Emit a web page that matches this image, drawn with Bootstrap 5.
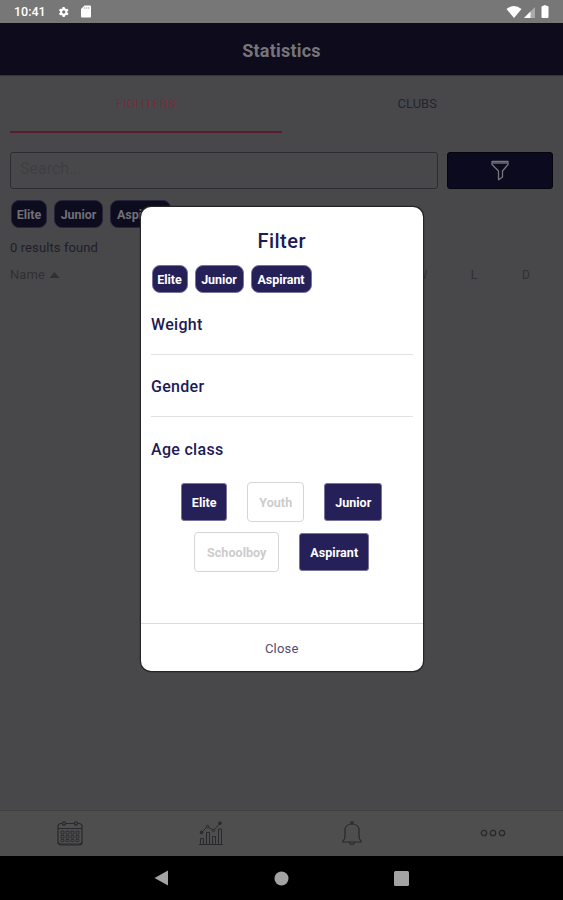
<!DOCTYPE html>
<html lang="en">
<head>
<meta charset="utf-8">
<meta name="viewport" content="width=device-width, initial-scale=1">
<title>Statistics</title>
<link href="https://cdn.jsdelivr.net/npm/bootstrap@5.3.0/dist/css/bootstrap.min.css" rel="stylesheet">
<style>
body{font-family:Roboto,"Liberation Sans",sans-serif;background:#48484a;color:#1f1d2a;font-size:13px;line-height:18px;letter-spacing:.1px}
.screen{width:563px;height:900px;overflow:hidden;background:#48484a}
svg{display:block}
.status{height:23px;background:#777;color:#fff;padding:0 11px 0 14px;font-size:12.5px;font-weight:500;letter-spacing:0}
.title-bar{height:53px;background:#0d0b1c;border-bottom:1px solid #353539;color:#76757b;font-size:18px;font-weight:700;padding-top:3px;letter-spacing:.2px}
.tabs{height:57px;padding:1px 10px 0}
.tab-item{border-bottom:2px solid transparent;letter-spacing:0;color:#25242e}
.tab-item.on{color:#7a2c3c;border-color:#5b1d2a}
.search-row{padding:19px 10px 0;gap:9px}
.search-box{width:428px;height:37px;border:1.5px solid #2d2d31;border-radius:3px;padding:0 0 3px 9px;color:#3f3f42;font-size:16px;letter-spacing:0}
.filter-btn{width:106px;height:37px;border-radius:3px;background:#0c0a1f;border:1px solid #05040c}
.chips{gap:7px}
.chips-page{padding:11px 0 0 11px}
.chip{height:28px;border-radius:8px;background:#0d0b1e;color:#717077;font-size:12.5px;font-weight:700;letter-spacing:-.05px;border:1px solid #25243a;padding-top:1px}
.chip-e{width:36px}.chip-j{width:49px}.chip-a{width:61px}
.count-line{padding:11px 0 0 10px}
.list-head{padding:9px 11px 0 10px;color:#303033}
.stat-col{width:52px;text-align:center;font-size:12px}
.dialog-box{left:141px;top:207px;width:281.500px;height:464px;background:#fff;border-radius:10px;box-shadow:0 0 0 1.2px #252527;color:#211a55}
.dialog-title{font-size:20px;font-weight:500;line-height:26px;padding-top:21px;letter-spacing:.45px}
.dialog-box .chips{padding:11px 10px 0 10.500px}
.dialog-box .chip{background:#262059;color:#fff;border-color:#77739b}
.section-head{height:62px;margin:0 10px;font-size:16px;font-weight:500;letter-spacing:.3px;padding-top:3px}
.section-head.ruled{border-bottom:1.5px solid #e2e2e4}
.opt{height:38px;border-radius:3px;background:#262059;border:1px solid #77739b;color:#fff;font-size:12.5px;font-weight:700;letter-spacing:.05px;padding-top:1px}
.opt.off{height:40px;background:#fff;color:#ccc;border:1.5px solid #d5d5d6;border-radius:4px}
.opt-e{width:46px}.opt-y{width:57px}.opt-j{width:58px}.opt-s{width:85px}.opt-a{width:70px}
.age-opts{padding-top:3px;row-gap:10px}
.opts{gap:20px;height:40px}
.dialog-foot{height:48px;border-top:1.5px solid #dcdcde;color:#514c72;letter-spacing:.2px;padding-top:2px}
.bottom-nav{height:46px;background:#4e4e4e;border-top:1px solid #414141;color:#29292d}
.sys-nav{height:44px;background:#000;color:#a3a3a3}
.sys-nav .key{width:120px}
</style>
<script src="https://cdn.jsdelivr.net/npm/bootstrap@5.3.0/dist/js/bootstrap.bundle.min.js"></script>
</head>
<body>
<div class="screen position-relative d-flex flex-column">
  <div class="status d-flex align-items-center flex-shrink-0">
    <span>10:41</span>
    <svg class="ms-2 ps-1" width="22" height="14" viewBox="0 0 22 14"><g transform="translate(7 7)" fill="#fff"><circle r="4.500"/><rect x="-1.500" y="-6" width="3" height="12" rx=".6"/><rect x="-1.500" y="-6" width="3" height="12" rx=".6" transform="rotate(60)"/><rect x="-1.500" y="-6" width="3" height="12" rx=".6" transform="rotate(120)"/><circle r="2" fill="#777"/></g></svg>
    <svg class="ms-1" width="12" height="13" viewBox="0 0 12 13"><path d="M4.500 .5H10a1 1 0 0 1 1 1v10a1 1 0 0 1-1 1H2a1 1 0 0 1-1-1V4z" fill="#fff"/><path d="M4.700 2v2M6.700 2v2M8.700 2v2" stroke="#aaa" stroke-width=".8"/></svg>
    <svg class="ms-auto" width="46" height="14" viewBox="0 0 46 14"><path d="M.5 4Q8 -2.200 15.500 4L8 13z" fill="#fff"/><path d="M29 2v11H18z" fill="#aaa"/><path d="M24.500 6.500V13H18z" fill="#fff"/><path d="M36.500 1h1V.3h3V1h1q1 0 1 1v10q0 1-1 1h-5q-1 0-1-1V2q0-1 1-1z" fill="#fff"/></svg>
  </div>
  <header class="title-bar d-flex align-items-center justify-content-center flex-shrink-0">Statistics</header>
  <nav class="tabs d-flex flex-shrink-0">
    <div class="tab-item on flex-fill w-50 d-flex align-items-center justify-content-center">FIGHTERS</div>
    <div class="tab-item flex-fill w-50 d-flex align-items-center justify-content-center">CLUBS</div>
  </nav>
  <main class="flex-fill">
    <div class="search-row d-flex">
      <div class="search-box d-flex align-items-center">Search...</div>
      <div class="filter-btn d-flex align-items-center justify-content-center">
        <svg width="18" height="21" viewBox="0 0 18 21" fill="none" stroke="#77767e" stroke-width="1.300" stroke-linejoin="round"><path d="M1 1.500h16v3L11.500 11v6L7.500 19.700V11L1 4.500z"/><path d="M1.500 3h15"/></svg>
      </div>
    </div>
    <div class="chips chips-page d-flex">
      <span class="chip chip-e d-flex align-items-center justify-content-center">Elite</span>
      <span class="chip chip-j d-flex align-items-center justify-content-center">Junior</span>
      <span class="chip chip-a d-flex align-items-center justify-content-center">Aspirant</span>
    </div>
    <div class="count-line">0 results found</div>
    <div class="list-head d-flex align-items-center">
      <span>Name</span>
      <svg class="ms-1" width="11" height="8" viewBox="0 0 11 8"><path d="M5.500 1l5 6H.5z" fill="#303033"/></svg>
      <span class="stat-col ms-auto">W</span><span class="stat-col">L</span><span class="stat-col">D</span>
    </div>
  </main>
  <nav class="bottom-nav d-flex align-items-center flex-shrink-0">
    <div class="w-25 d-flex justify-content-center">
      <svg width="26" height="26" viewBox="0 0 26 26" fill="none" stroke="currentColor" stroke-width="1.200"><rect x="1" y="2.500" width="24" height="21.500" rx="3"/><path d="M1 7.500h24M1 21q0 2 3 2h18q3 0 3-2"/><circle cx="7" cy="2.500" r="1.600" fill="#4e4e4e"/><circle cx="19" cy="2.500" r="1.600" fill="#4e4e4e"/><path stroke-width=".8" d="M4 10h3v3H4zM9 10h3v3H9zM14 10h3v3h-3zM19 10h3v3h-3zM4 14.500h3V17H4zM9 14.500h3V17H9zM14 14.500h3V17h-3zM19 14.500h3V17h-3zM4 18.500h3v2H4zM9 18.500h3v2H9zM14 18.500h3v2h-3zM19 18.500h3v2h-3z"/></svg>
    </div>
    <div class="w-25 d-flex justify-content-center">
      <svg width="24" height="25" viewBox="0 0 24 25" fill="none" stroke="currentColor" stroke-width="1"><path d="M2.500 11.500L8.500 5.500l6 4 7-7.500"/><g fill="#4e4e4e"><circle cx="2.500" cy="11.500" r="1.300" fill="currentColor"/><circle cx="8.500" cy="5.500" r="1.200"/><circle cx="14.500" cy="9.500" r="1.200"/><circle cx="21" cy="2.200" r="1.300" fill="currentColor"/></g><path d="M1.500 23.500v-6h3v6M7.500 23.500v-12h3v12M13.500 23.500v-8h3v8M19.500 23.500V8h3v15.500M0 23.500h24"/></svg>
    </div>
    <div class="w-25 d-flex justify-content-center">
      <svg width="20" height="25" viewBox="0 0 20 25" fill="none" stroke="currentColor" stroke-width="1.200"><path d="M1 21v-1.300q2-1.500 2-4.200v-6C3 5.500 6 3 10 3s7 2.500 7 6.500v6q0 2.700 2 4.200V21z"/><circle cx="10" cy="1.800" r="1.200"/><path d="M7.500 21.500q.5 2 2.500 2t2.500-2"/></svg>
    </div>
    <div class="w-25 d-flex justify-content-center">
      <svg width="26" height="10" viewBox="0 0 26 10" fill="none" stroke="currentColor" stroke-width="1.300"><circle cx="4" cy="4" r="2.700"/><circle cx="13" cy="4" r="2.700"/><circle cx="22" cy="4" r="2.700"/></svg>
    </div>
  </nav>
  <div class="sys-nav d-flex align-items-center justify-content-center flex-shrink-0">
    <div class="key d-flex justify-content-center"><svg width="16" height="17" viewBox="0 0 16 17"><path d="M14 .5v15L.5 8z" fill="currentColor"/></svg></div>
    <div class="key d-flex justify-content-center"><svg width="15" height="15" viewBox="0 0 15 15"><circle cx="7.500" cy="7.500" r="7" fill="currentColor"/></svg></div>
    <div class="key d-flex justify-content-center"><svg width="15" height="15" viewBox="0 0 15 15"><rect width="15" height="15" rx="1.500" fill="currentColor"/></svg></div>
  </div>

  <section class="dialog-box position-absolute d-flex flex-column" role="dialog" aria-label="Filter">
    <div class="dialog-title text-center">Filter</div>
    <div class="chips d-flex">
      <span class="chip chip-e d-flex align-items-center justify-content-center">Elite</span>
      <span class="chip chip-j d-flex align-items-center justify-content-center">Junior</span>
      <span class="chip chip-a d-flex align-items-center justify-content-center">Aspirant</span>
    </div>
    <div class="section-head ruled d-flex align-items-center">Weight</div>
    <div class="section-head ruled d-flex align-items-center">Gender</div>
    <div class="section-head d-flex align-items-center">Age class</div>
    <div class="age-opts d-flex flex-column">
      <div class="opts d-flex align-items-center justify-content-center">
        <span class="opt opt-e d-flex align-items-center justify-content-center">Elite</span>
        <span class="opt off opt-y d-flex align-items-center justify-content-center">Youth</span>
        <span class="opt opt-j d-flex align-items-center justify-content-center">Junior</span>
      </div>
      <div class="opts d-flex align-items-center justify-content-center">
        <span class="opt off opt-s d-flex align-items-center justify-content-center">Schoolboy</span>
        <span class="opt opt-a d-flex align-items-center justify-content-center">Aspirant</span>
      </div>
    </div>
    <div class="dialog-foot d-flex align-items-center justify-content-center mt-auto">Close</div>
  </section>
</div>
</body>
</html>
